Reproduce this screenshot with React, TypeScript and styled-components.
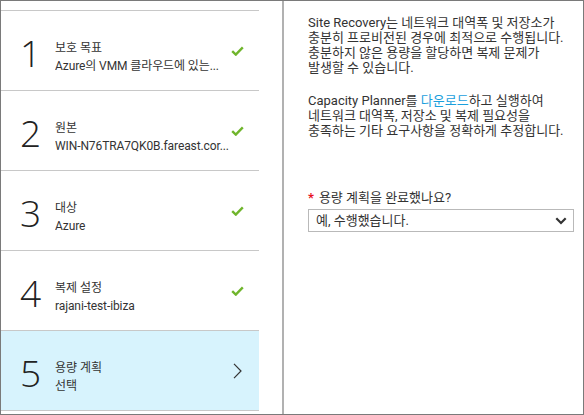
import React from "react";
import styled, { createGlobalStyle } from "styled-components";

const GlobalStyle = createGlobalStyle`
  html, body {
    margin: 0;
    padding: 0;
    background: #ffffff;
  }
  body {
    font-family: Roboto, "Noto Sans CJK KR", sans-serif;
    color: #333333;
    word-break: keep-all;
  }
  * {
    box-sizing: border-box;
  }
`;

const Frame = styled.div`
  display: flex;
  width: 584px;
  height: 415px;
  border: 1px solid #7a7a7a;
  background: #ffffff;
`;

const StepColumn = styled.div`
  width: 281px;
  padding-top: 9px;
  flex-shrink: 0;
`;

const StepList = styled.div`
  width: 258px;
  border-bottom: 1px solid #c8c8c8;
`;

const StepRow = styled.div<{ $active?: boolean }>`
  display: flex;
  align-items: center;
  height: 80px;
  padding: 0 15px 0 19px;
  border-top: 1px solid #c8c8c8;
  background: ${(p) => (p.$active ? "#d7f3fd" : "#ffffff")};
`;

const StepNumber = styled.div`
  width: 35px;
  flex-shrink: 0;
  margin-top: 3px;
  font-family: "Open Sans", sans-serif;
  font-size: 37px;
  font-weight: 300;
  line-height: 1;
  color: #222222;
`;

const StepText = styled.div`
  flex: 1;
  min-width: 0;
  margin-right: 1px;
  padding-top: 12px;
  font-size: 12px;
  line-height: 18px;
`;

const StepTitle = styled.div`
  white-space: nowrap;
  overflow: hidden;
  text-overflow: ellipsis;
`;

const StepSub = styled(StepTitle)`
  letter-spacing: -0.1px;
`;

const StepIcon = styled.div`
  width: 13px;
  flex-shrink: 0;
  display: flex;
  justify-content: center;
  align-items: center;
`;

const DetailPane = styled.div`
  flex: 1;
  border-left: 2px solid #b1b1b1;
  padding: 14px 9px 0 24px;
  font-size: 13px;
  line-height: 15px;
`;

const Para = styled.p`
  max-width: 256px;
  margin: 0 0 18px;
`;

const Link = styled.a`
  color: #1aa0dd;
  text-decoration: none;
`;

const FieldLabel = styled.div`
  margin-top: 52px;
  display: flex;
  align-items: center;
  gap: 5px;
  line-height: 15px;
`;

const Required = styled.span`
  color: #e81123;
  font-weight: 700;
`;

const Select = styled.div`
  display: flex;
  align-items: center;
  justify-content: space-between;
  margin-top: 4px;
  height: 23px;
  padding: 0 6px 0 7px;
  border: 1px solid #b9b9b9;
  background: #ffffff;
`;

const Check = () => (
  <svg width="13" height="10" viewBox="0 0 13 10">
    <path d="M1.2 5.2 L4.8 8.6 L11.8 1.4" fill="none" stroke="#6fb52c" strokeWidth="2.4" />
  </svg>
);

const ChevronRight = () => (
  <svg width="9" height="16" viewBox="0 0 9 16">
    <path d="M1 0.8 L8 8 L1 15.2" fill="none" stroke="#333" strokeWidth="1.2" />
  </svg>
);

const ChevronDown = () => (
  <svg width="12" height="8" viewBox="0 0 12 8">
    <path d="M1.3 1.3 L6 6 L10.7 1.3" fill="none" stroke="#333" strokeWidth="2.2" />
  </svg>
);

const steps = [
  { n: 1, title: "보호 목표", sub: "Azure의 VMM 클라우드에 있는...", done: true },
  { n: 2, title: "원본", sub: "WIN-N76TRA7QK0B.fareast.cor...", done: true },
  { n: 3, title: "대상", sub: "Azure", done: true },
  { n: 4, title: "복제 설정", sub: "rajani-test-ibiza", done: true },
  { n: 5, title: "용량 계획", sub: "선택", done: false },
];

export default function App() {
  return (
    <>
      <GlobalStyle />
      <Frame>
        <StepColumn>
          <StepList>
            {steps.map((s) => (
              <StepRow key={s.n} $active={!s.done}>
                <StepNumber>{s.n}</StepNumber>
                <StepText>
                  <StepTitle>{s.title}</StepTitle>
                  <StepSub>{s.sub}</StepSub>
                </StepText>
                <StepIcon>{s.done ? <Check /> : <ChevronRight />}</StepIcon>
              </StepRow>
            ))}
          </StepList>
        </StepColumn>
        <DetailPane>
          <Para>
            Site Recovery는 네트워크 대역폭 및 저장소가 충분히 프로비전된 경우에 최적으로 수행됩니다.
            충분하지 않은 용량을 할당하면 복제 문제가 발생할 수 있습니다.
          </Para>
          <Para>
            Capacity Planner를 <Link href="#">다운로드</Link>하고 실행하여 네트워크 대역폭, 저장소 및 복제
            필요성을 충족하는 기타 요구사항을 정확하게 추정합니다.
          </Para>
          <FieldLabel>
            <Required>*</Required>
            <span>용량 계획을 완료했나요?</span>
          </FieldLabel>
          <Select>
            <span>예, 수행했습니다.</span>
            <ChevronDown />
          </Select>
        </DetailPane>
      </Frame>
    </>
  );
}
